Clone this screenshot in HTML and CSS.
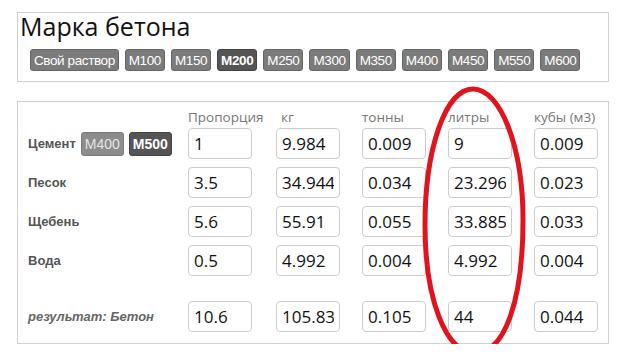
FILE: index.html
```html
<!DOCTYPE html>
<html>
<head>
    <meta charset="UTF-8">
    <title>Марка бетона</title>
    <link rel="stylesheet" href="styles.css">
</head>
<body>
<div class="page">
    <div class="panel brand"><!-- Grade selector -->
        <h1 class="title">Марка бетона</h1>
        <div class="grades">
            <button class="grade">Свой раствор</button>
            <button class="grade">M100</button>
            <button class="grade">M150</button>
            <button class="grade active">M200</button>
            <button class="grade">M250</button>
            <button class="grade">M300</button>
            <button class="grade">M350</button>
            <button class="grade">M400</button>
            <button class="grade">M450</button>
            <button class="grade">M550</button>
            <button class="grade">M600</button>
        </div>
    </div>

    <div class="panel calc"><!-- Calculator -->
        <div class="row head">
            <div></div>
            <div class="col-head">Пропорция</div>
            <div class="col-head kg">кг</div>
            <div class="col-head">тонны</div>
            <div class="col-head">литры</div>
            <div class="col-head">кубы (м3)</div>
        </div>
        <div class="row first">
            <div class="label">Цемент
                <button class="cement">M400</button>
                <button class="cement active">M500</button>
            </div>
            <input class="cell" type="text" value="1">
            <input class="cell" type="text" value="9.984">
            <input class="cell" type="text" value="0.009">
            <input class="cell" type="text" value="9">
            <input class="cell" type="text" value="0.009">
        </div>
        <div class="row">
            <div class="label">Песок</div>
            <input class="cell" type="text" value="3.5">
            <input class="cell" type="text" value="34.944">
            <input class="cell" type="text" value="0.034">
            <input class="cell" type="text" value="23.296">
            <input class="cell" type="text" value="0.023">
        </div>
        <div class="row">
            <div class="label">Щебень</div>
            <input class="cell" type="text" value="5.6">
            <input class="cell" type="text" value="55.91">
            <input class="cell" type="text" value="0.055">
            <input class="cell" type="text" value="33.885">
            <input class="cell" type="text" value="0.033">
        </div>
        <div class="row">
            <div class="label">Вода</div>
            <input class="cell" type="text" value="0.5">
            <input class="cell" type="text" value="4.992">
            <input class="cell" type="text" value="0.004">
            <input class="cell" type="text" value="4.992">
            <input class="cell" type="text" value="0.004">
        </div>
        <div class="row total">
            <div class="label result">результат: Бетон</div>
            <input class="cell" type="text" value="10.6">
            <input class="cell" type="text" value="105.83">
            <input class="cell" type="text" value="0.105">
            <input class="cell" type="text" value="44">
            <input class="cell" type="text" value="0.044">
        </div>
    </div>

    <!-- hand-drawn circle around the litres column -->
    <svg class="mark" width="617" height="356" viewBox="0 0 617 356">
        <path d="M473,89 C501,89 523,148 523,220 C523,300 505,353 475,353 C446,353 425,300 425,225 C425,150 445,89 473,89 Z"
              fill="none" stroke="#e1141e" stroke-width="5"/>
    </svg>
</div>
</body>
</html>
```

FILE: styles.css
```css
body {
    margin: 0;
    font-family: "Open Sans", sans-serif;
    background: #fff;
}

.page {
    position: relative;
    padding: 12px 0 0 17px;
}

.panel {
    width: 592px;
    box-sizing: border-box;
    border: 1px solid #d0d0d0;
}

/* Grade selector */
.brand {
    padding: 0 10px 10px 2px;
}

.title {
    margin: 0;
    font-size: 25px;
    font-weight: normal;
    line-height: 26px;
    color: #111;
}

.grades {
    display: flex;
    gap: 6px;
    margin: 10px 0 0 10px;
}

.grade, .cement {
    font-family: "Liberation Sans", Arial, sans-serif;
    color: #fff;
    background-color: #7b7b7b;
    border: 1px solid #666;
    border-radius: 3px;
    cursor: pointer;
}

.grade {
    height: 22px;
    padding: 0 3px;
    font-size: 13.5px;
    letter-spacing: -0.4px;
}

.grade.active, .cement.active {
    background-color: #555;
    border-color: #444;
    font-weight: bold;
}

/* Calculator */
.calc {
    margin-top: 19px;
    padding: 6px 10px 11px 10px;
}

.row {
    display: grid;
    grid-template-columns: 160px 88px 86px 86px 86px 64px;
    align-items: center;
    height: 31px;
    margin-top: 8px;
}

.row.head {
    height: 18px;
    margin-top: 0;
}

.row.first {
    margin-top: 2px;
}

.row.total {
    margin-top: 25px;
}

.col-head {
    font-size: 13.5px;
    line-height: 18px;
    color: #777;
    white-space: nowrap;
}

.col-head.kg {
    padding-left: 5px;
}

.label {
    display: flex;
    align-items: center;
    gap: 3px;
    font-family: "Liberation Sans", Arial, sans-serif;
    font-size: 13px;
    font-weight: bold;
    color: #555;
}

.result {
    font-style: italic;
    color: #666;
}

.cement {
    height: 24px;
    padding: 0 3px;
    font-size: 14px;
    margin-left: 2px;
}

.cement:not(.active) {
    background-color: #8c8c8c;
    border-color: #7a7a7a;
    color: #e4e4e4;
}

.cell {
    width: 64px;
    height: 31px;
    box-sizing: border-box;
    padding: 0 5px;
    font-family: "Open Sans", sans-serif;
    font-size: 17px;
    color: #111;
    border: 1px solid #ccc;
    border-radius: 4px;
    outline: 0;
}

/* red marker overlay */
.mark {
    position: absolute;
    left: 0;
    top: 0;
    pointer-events: none;
}
```
